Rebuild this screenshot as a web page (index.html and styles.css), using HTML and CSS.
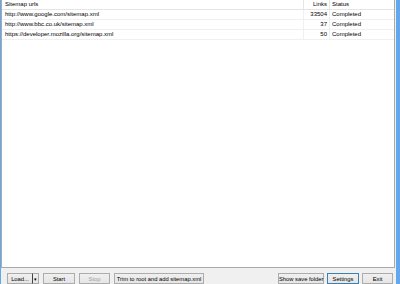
FILE: index.html
```html
<!DOCTYPE html>
<html lang="en">
<head>
    <meta charset="UTF-8">
    <meta name="viewport" content="width=device-width, initial-scale=1.0">
    <title>Sitemap Crawler</title>
    <link rel="stylesheet" href="styles.css">
</head>
<body>
    <div class="frame-left"></div>
    <div class="content">
        <div class="list">
            <div class="row header">
                <div class="cell url">Sitemap urls</div>
                <div class="cell links">Links</div>
                <div class="cell status">Status</div>
            </div>
            <div class="row">
                <div class="cell url">http://www.google.com/sitemap.xml</div>
                <div class="cell links">33504</div>
                <div class="cell status">Completed</div>
            </div>
            <div class="row">
                <div class="cell url">http://www.bbc.co.uk/sitemap.xml</div>
                <div class="cell links">37</div>
                <div class="cell status">Completed</div>
            </div>
            <div class="row">
                <div class="cell url">https://developer.mozilla.org/sitemap.xml</div>
                <div class="cell links">50</div>
                <div class="cell status">Completed</div>
            </div>
        </div>
        <div class="toolbar">
            <div class="split">
                <button class="button load">Load...</button>
                <button class="button arrow">&#9662;</button>
            </div>
            <button class="button start">Start</button>
            <button class="button stop" disabled>Stop</button>
            <button class="button trim">Trim to root and add sitemap.xml</button>
            <div class="spacer"></div>
            <button class="button folder">Show save folder</button>
            <button class="button settings">Settings</button>
            <button class="button exit">Exit</button>
        </div>
    </div>
    <div class="frame-right"></div>
</body>
</html>
```

FILE: styles.css
```css
body {
    margin: 0;
    padding: 0;
    height: 284px;
    display: flex;
    background-color: #f0f0f0;
    font-family: 'Liberation Sans', sans-serif;
    font-size: 6px;
    color: #000;
    overflow: hidden;
}

.frame-left {
    width: 1px;
    background-color: #62a8ef;
}

.frame-right {
    width: 4px;
    background-color: #62a8ef;
}

.content {
    flex: 1;
    display: flex;
    flex-direction: column;
}

.list {
    flex: 1;
    background-color: #fff;
    border: 1px solid #aaa;
    border-top: none;
    margin-right: 1px;
}

.row {
    display: flex;
    height: 10px;
    border-bottom: 1px solid #f0f0f0;
    box-sizing: border-box;
}

.header {
    height: 10px;
    border-bottom: 1px solid #e5e5e5;
}

.cell {
    line-height: 9px;
    white-space: nowrap;
    overflow: hidden;
    box-sizing: border-box;
}

.url {
    width: 302px;
    padding-left: 3px;
    border-right: 1px solid #f0f0f0;
}

.links {
    width: 26px;
    padding-right: 2px;
    text-align: right;
    border-right: 1px solid #f0f0f0;
}

.status {
    flex: 1;
    padding-left: 2px;
}

.header .url,
.header .links {
    border-right-color: #e5e5e5;
}

.toolbar {
    height: 16px;
    display: flex;
    align-items: flex-start;
    padding: 5px 3px 0 6px;
    box-sizing: border-box;
    gap: 4px;
}

.spacer {
    flex: 1;
}

.split {
    display: flex;
}

.button {
    height: 11px;
    padding: 0;
    font-family: 'Liberation Sans', sans-serif;
    font-size: 5.8px;
    color: #000;
    background: linear-gradient(#f0f0f0, #e5e5e5);
    border: 1px solid #acacac;
    box-sizing: border-box;
    white-space: nowrap;
    cursor: pointer;
}

.load {
    width: 26px;
    border-right: 1px solid #444;
}

.arrow {
    width: 6px;
    border-left: none;
    font-size: 5px;
}

.start { width: 32px; }
.stop { width: 31px; color: #a0a0a0; }
.trim { width: 90px; }
.folder { width: 46px; margin-right: -1px; }
.settings { width: 32px; border-color: #3c7fb1; }
.exit { width: 31px; margin-left: -1px; }
```
